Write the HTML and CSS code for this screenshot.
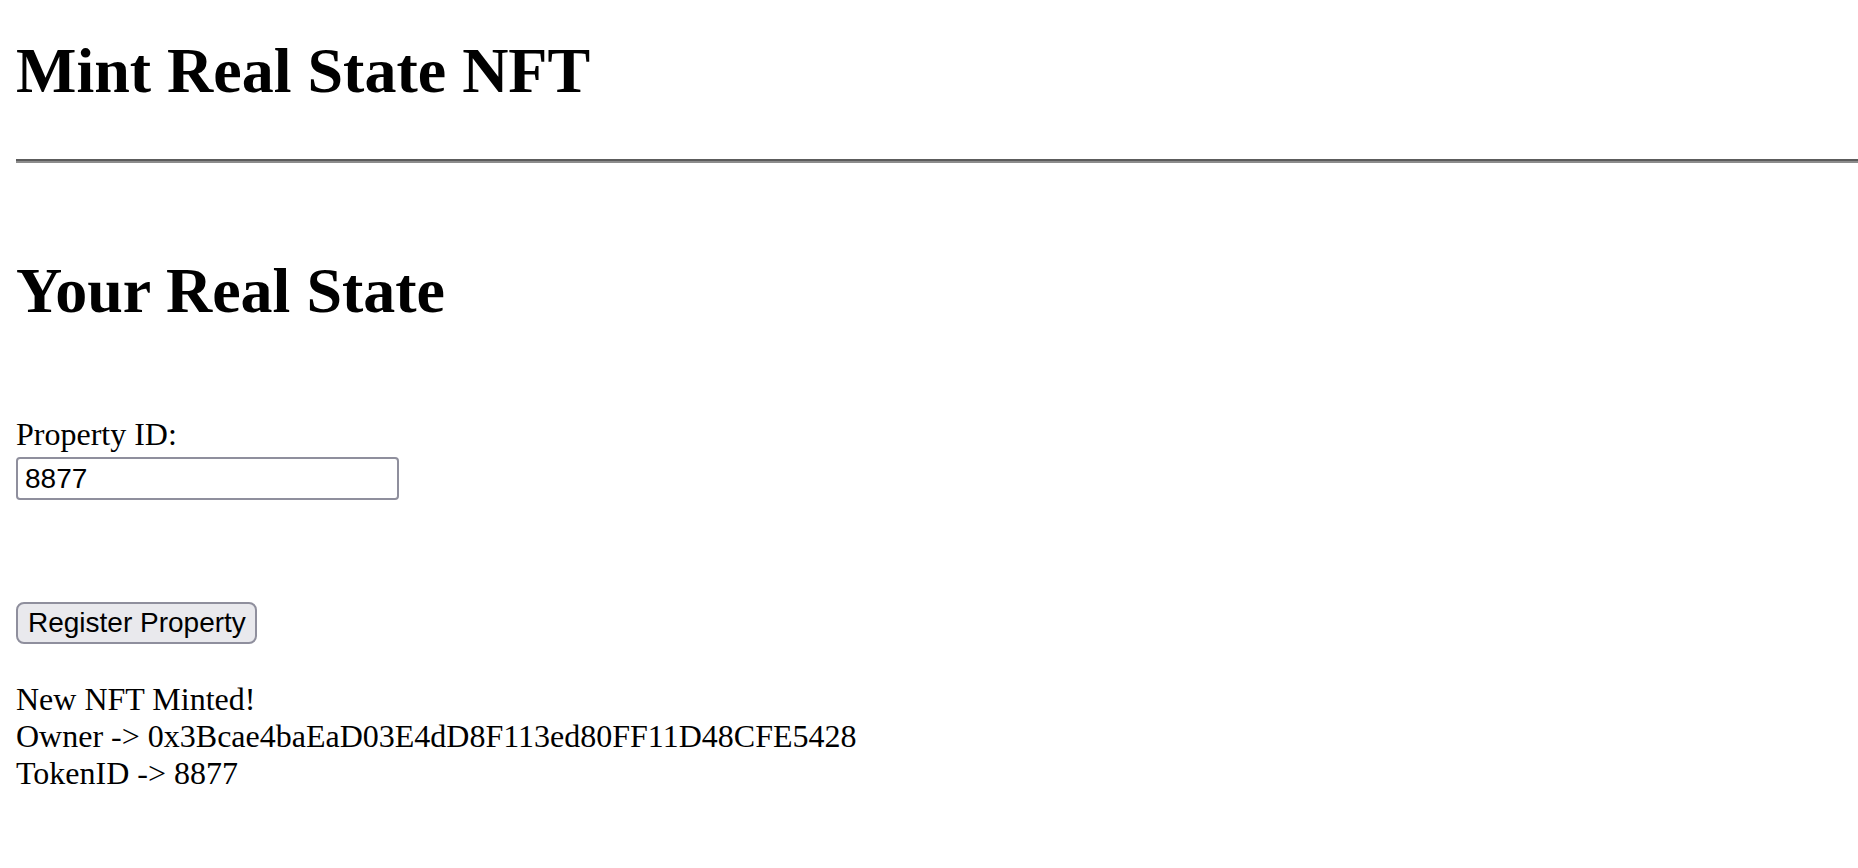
FILE: index.html
```html
<!DOCTYPE html>
<html lang="en">
<head>
<meta charset="utf-8">
<title>Mint Real State NFT</title>
<link rel="stylesheet" href="styles.css">
</head>
<body>
  <h1 class="title">Mint Real State NFT</h1>
  <hr class="rule">
  <h2 class="title title-second">Your Real State</h2>
  <form class="form">
    <label class="label" for="pid">Property ID:</label>
    <input class="input" id="pid" type="text" value="8877">
    <button class="button" type="button">Register Property</button>
  </form>
  <div class="result">
    <div class="line">New NFT Minted!</div>
    <div class="line">Owner -&gt; 0x3Bcae4baEaD03E4dD8F113ed80FF11D48CFE5428</div>
    <div class="line">TokenID -&gt; 8877</div>
  </div>
</body>
</html>
```
FILE: styles.css
```css
html, body {
  margin: 0;
  background: #ffffff;
}
body {
  padding: 34px 0 0 16px;
  font-family: "Liberation Serif", "Times New Roman", serif;
  font-size: 32px;
  color: #000000;
  overflow-x: hidden;
}
.title {
  margin: 0;
  font-size: 64px;
  font-weight: bold;
  line-height: 74px;
}
.rule {
  height: 0;
  margin: 51px 0 0 0;
  border: 0;
  border-top: 2px solid #5c5c5c;
  border-bottom: 2px solid #8c8c8c;
}
.title-second {
  margin-top: 91px;
}
.form {
  display: flex;
  flex-direction: column;
  align-items: flex-start;
  margin-top: 88px;
}
.label {
  line-height: 37px;
}
.input {
  box-sizing: border-box;
  width: 383px;
  height: 43px;
  margin: 4px 0 0 0;
  padding: 0 7px;
  border: 2px solid #8f8f9d;
  border-radius: 4px;
  font-family: "Liberation Sans", Arial, sans-serif;
  font-size: 28px;
  color: #000000;
  background: #ffffff;
}
.button {
  box-sizing: border-box;
  width: 241px;
  height: 42px;
  margin-top: 102px;
  padding: 0 10px;
  border: 2px solid #8f8f9d;
  border-radius: 8px;
  background: #e9e9ed;
  font-family: "Liberation Sans", Arial, sans-serif;
  font-size: 28px;
  color: #000000;
  white-space: nowrap;
}
.result {
  margin-top: 37px;
  line-height: 37px;
}
```
